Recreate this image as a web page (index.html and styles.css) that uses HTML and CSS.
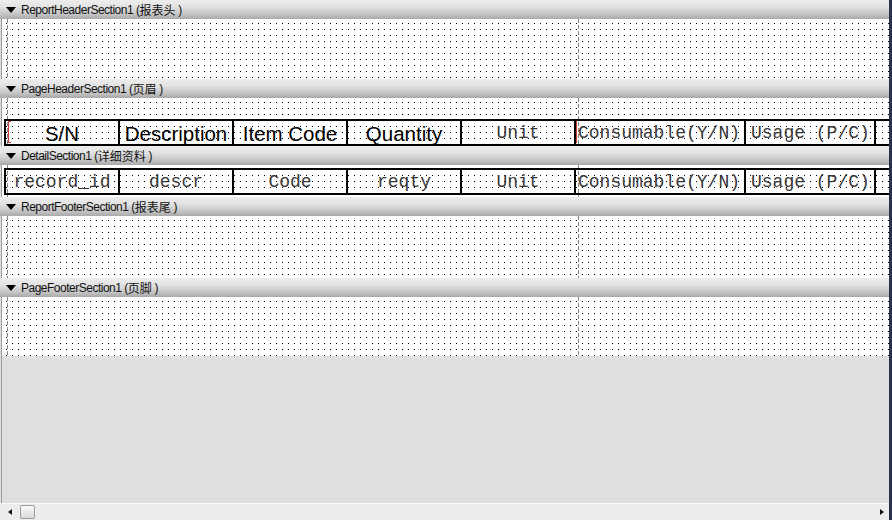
FILE: index.html
```html
<!DOCTYPE html>
<html lang="zh-CN">
<head>
  <meta charset="UTF-8" />
  <title>报表设计</title>
  <link rel="stylesheet" href="styles.css">
</head>
<body>
  <div class="designer">
    <div class="canvas">
      <div class="band-bar"><span class="caret"></span>ReportHeaderSection1 (<span class="cn">报表头</span> )</div>
      <div class="band-body report-header"></div>

      <div class="band-bar"><span class="caret"></span>PageHeaderSection1 (<span class="cn">页眉</span> )</div>
      <div class="band-body page-header">
        <div class="row">
          <div class="cell sans marked">S/N</div>
          <div class="cell sans">Description</div>
          <div class="cell sans">Item Code</div>
          <div class="cell sans">Quantity</div>
          <div class="cell mono">Unit</div>
          <div class="cell mono wide left marked">Consumable(Y/N)</div>
          <div class="cell mono usage left">Usage (P/C)</div>
          <div class="cell mono"></div>
        </div>
      </div>

      <div class="band-bar"><span class="caret"></span>DetailSection1 (<span class="cn">详细资料</span> )</div>
      <div class="band-body detail">
        <div class="row">
          <div class="cell mono">record_id</div>
          <div class="cell mono">descr</div>
          <div class="cell mono">Code</div>
          <div class="cell mono">reqty</div>
          <div class="cell mono">Unit</div>
          <div class="cell mono wide left">Consumable(Y/N)</div>
          <div class="cell mono usage left">Usage (P/C)</div>
          <div class="cell mono"></div>
        </div>
      </div>

      <div class="band-bar"><span class="caret"></span>ReportFooterSection1 (<span class="cn">报表尾</span> )</div>
      <div class="band-body report-footer"></div>

      <div class="band-bar"><span class="caret"></span>PageFooterSection1 (<span class="cn">页脚</span> )</div>
      <div class="band-body page-footer"></div>

      <div class="spare"></div>
    </div>

    <div class="hscroll">
      <span class="arrow-left"></span>
      <span class="thumb"></span>
      <span class="track"></span>
      <span class="arrow-right"></span>
    </div>
  </div>
</body>
</html>
```

FILE: styles.css
```css
body {
  margin: 0;
  background-color: #dfdfdf;
  font-family: 'Liberation Sans', 'Noto Sans CJK SC', sans-serif;
}

.designer {
  width: 892px;
  height: 520px;
  display: flex;
  flex-direction: column;
  border-right: 3px solid #27334b;
  box-sizing: border-box;
  overflow: hidden;
}

.canvas {
  flex: 1;
  display: flex;
  flex-direction: column;
  background-color: #dfdfdf;
  overflow: hidden;
}

/* section header strip */
.band-bar {
  height: 19px;
  flex: none;
  display: flex;
  align-items: center;
  background: linear-gradient(#ededed 0%, #e3e3e3 35%, #c4c4c4 75%, #a9a9a9 100%);
  color: #111;
  font-size: 12px;
  letter-spacing: -0.5px;
  white-space: pre;
}

.band-bar .cn {
  font-size: 12px;
  letter-spacing: 0;
  font-family: 'Noto Sans CJK SC', sans-serif;
}

.caret {
  width: 0;
  height: 0;
  margin: 0 5px 0 6px;
  border-left: 5.5px solid transparent;
  border-right: 5.5px solid transparent;
  border-top: 6px solid #000;
}

/* dotted design surface */
.band-body {
  flex: none;
  position: relative;
  margin-left: 1px;
  border-left: 1px solid #9a9a9a;
  background-color: #000;
  background-image:
    linear-gradient(to right, #fff 5px, transparent 5px),
    linear-gradient(to bottom, #fff 5px, transparent 5px);
  background-size: 6px 6px;
  background-position: 5px 5px;
  overflow: hidden;
}

.band-body::before,
.band-body::after {
  content: "";
  position: absolute;
  top: 0;
  bottom: 0;
  width: 1px;
  background: repeating-linear-gradient(#858585 0 4px, transparent 4px 6px);
}

.band-body::before {
  left: 5px;
}

.band-body::after {
  left: 576px;
}

.report-header { height: 60px; }
.page-header { height: 48px; padding-top: 21px; box-sizing: border-box; }
.detail { height: 32px; padding-top: 3px; box-sizing: border-box; }
.report-footer { height: 62px; }
.page-footer { height: 59px; }

.row {
  position: relative;
  z-index: 1;
  display: flex;
  width: max-content;
  margin-left: 2px;
  border: 2px solid #000;
  border-right: none;
}

.cell {
  position: relative;
  width: 114px;
  height: 23px;
  box-sizing: border-box;
  border-right: 2px solid #000;
  text-align: center;
  white-space: pre;
  line-height: 23px;
}

.cell.wide { width: 170px; }
.cell.usage { width: 130px; padding-left: 5px; }
.cell.left { text-align: left; }
.cell.wide.left { padding-left: 2px; }

.sans {
  font-family: 'Liberation Sans', sans-serif;
  font-size: 20.5px;
  line-height: 25px;
  color: #000;
}

.mono {
  font-family: 'Liberation Mono', monospace;
  font-size: 18px;
  line-height: 24px;
  color: #383838;
}

/* selection marker on the left edge of a control */
.marked::before {
  content: "";
  position: absolute;
  left: 0;
  top: 0;
  bottom: 1px;
  width: 2px;
  border-left: 1px solid #d23a3a;
}

.sans.marked::before {
  left: 2px;
  border-top: 1px solid #d23a3a;
  border-bottom: 1px solid #d23a3a;
}

.spare {
  flex: 1;
  margin-left: 1px;
  border-left: 1px solid #9a9a9a;
}

/* horizontal scroll bar */
.hscroll {
  height: 16px;
  flex: none;
  display: flex;
  align-items: center;
  border-top: 1px solid #fbfbfb;
  background-color: #ececec;
}

.arrow-left {
  width: 0;
  height: 0;
  margin-left: 8px;
  border-top: 3.5px solid transparent;
  border-bottom: 3.5px solid transparent;
  border-right: 4px solid #111;
}

.thumb {
  width: 15px;
  height: 14px;
  margin-left: 8px;
  box-sizing: border-box;
  border: 1px solid #9c9c9c;
  border-radius: 2px;
  background: linear-gradient(#fbfbfb, #d9d9d9);
}

.track {
  flex: 1;
}

.arrow-right {
  width: 0;
  height: 0;
  margin-right: 5px;
  border-top: 3.5px solid transparent;
  border-bottom: 3.5px solid transparent;
  border-left: 4px solid #111;
}
```
